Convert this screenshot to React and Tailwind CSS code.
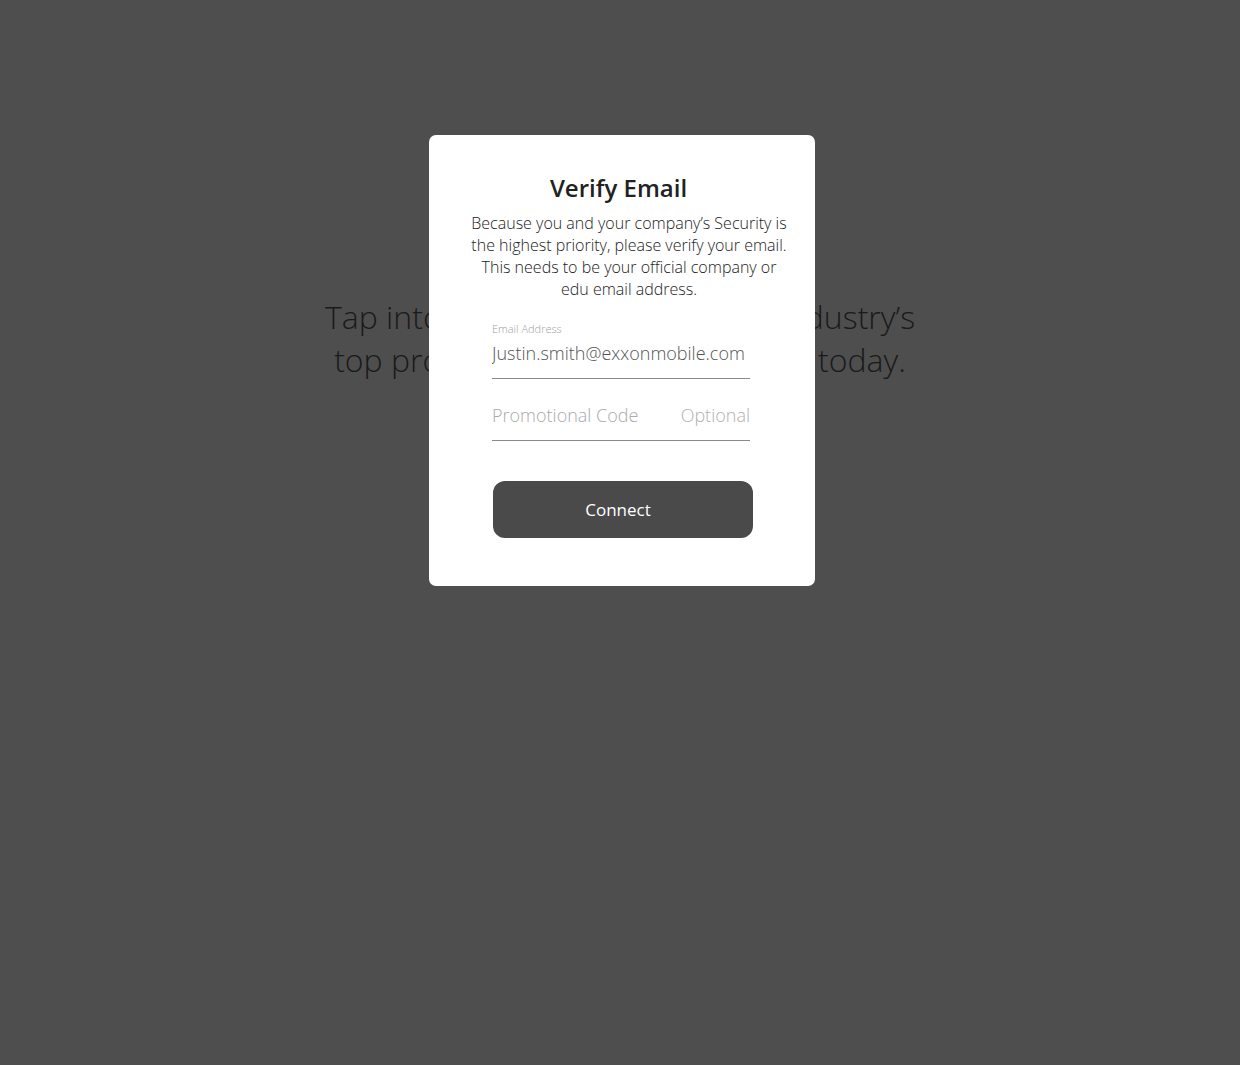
import React, { useState } from "react";

const App = () => {
  const [email, setEmail] = useState("Justin.smith@exxonmobile.com");
  const [promo, setPromo] = useState("");

  return (
    <div
      className="relative min-h-screen w-full bg-[#4e4e4e] overflow-hidden"
      style={{ fontFamily: '"Open Sans", "Liberation Sans", sans-serif' }}
    >
      <div className="pt-[295px] flex justify-center">
        <p className="w-[700px] text-center text-[32px] leading-[43px] font-light text-[#1a1a1a]">
          Tap into the expertise of all the industry’s
          <br />
          top professionals. Get connected today.
        </p>
      </div>

      <div className="absolute left-[429px] top-[135px] w-[386px] h-[451px] bg-white rounded-[7px] flex flex-col">
        <h2 className="pt-[37px] pr-[7px] text-center text-[24px] leading-[32px] font-semibold text-[#222]">
          Verify Email
        </h2>
        <p className="mt-[8px] pl-[40px] pr-[26px] text-center text-[16px] leading-[22px] font-light text-[#222]">
          Because you and your company’s Security is
          <br />
          the highest priority, please verify your email.
          <br />
          This needs to be your official company or
          <br />
          edu email address.
        </p>

        <div className="ml-[63px] w-[258px] mt-[22px]">
          <label className="block text-[11px] leading-[14px] font-light text-[#a0a0a0]">
            Email Address
          </label>
          <input
            className="block w-full mt-[5px] pb-[13px] text-[18px] leading-[24px] font-light text-[#555] border-b border-[#8a8a8a] outline-none bg-transparent"
            value={email}
            onChange={(e) => setEmail(e.target.value)}
          />
        </div>

        <div className="ml-[63px] w-[258px] mt-[24px] flex items-center border-b border-[#8a8a8a] pb-[13px]">
          <input
            className="flex-1 min-w-0 text-[18px] leading-[24px] font-light text-[#555] placeholder-[#aaa] outline-none bg-transparent"
            placeholder="Promotional Code"
            value={promo}
            onChange={(e) => setPromo(e.target.value)}
          />
          <span className="text-[18px] leading-[24px] font-light text-[#b0b0b0]">
            Optional
          </span>
        </div>

        <button className="ml-[64px] mt-[40px] w-[260px] h-[57px] rounded-[12px] bg-[#4a4a4a] text-white text-[17px] font-normal pr-[10px]">
          Connect
        </button>
      </div>
    </div>
  );
};

export default App;
